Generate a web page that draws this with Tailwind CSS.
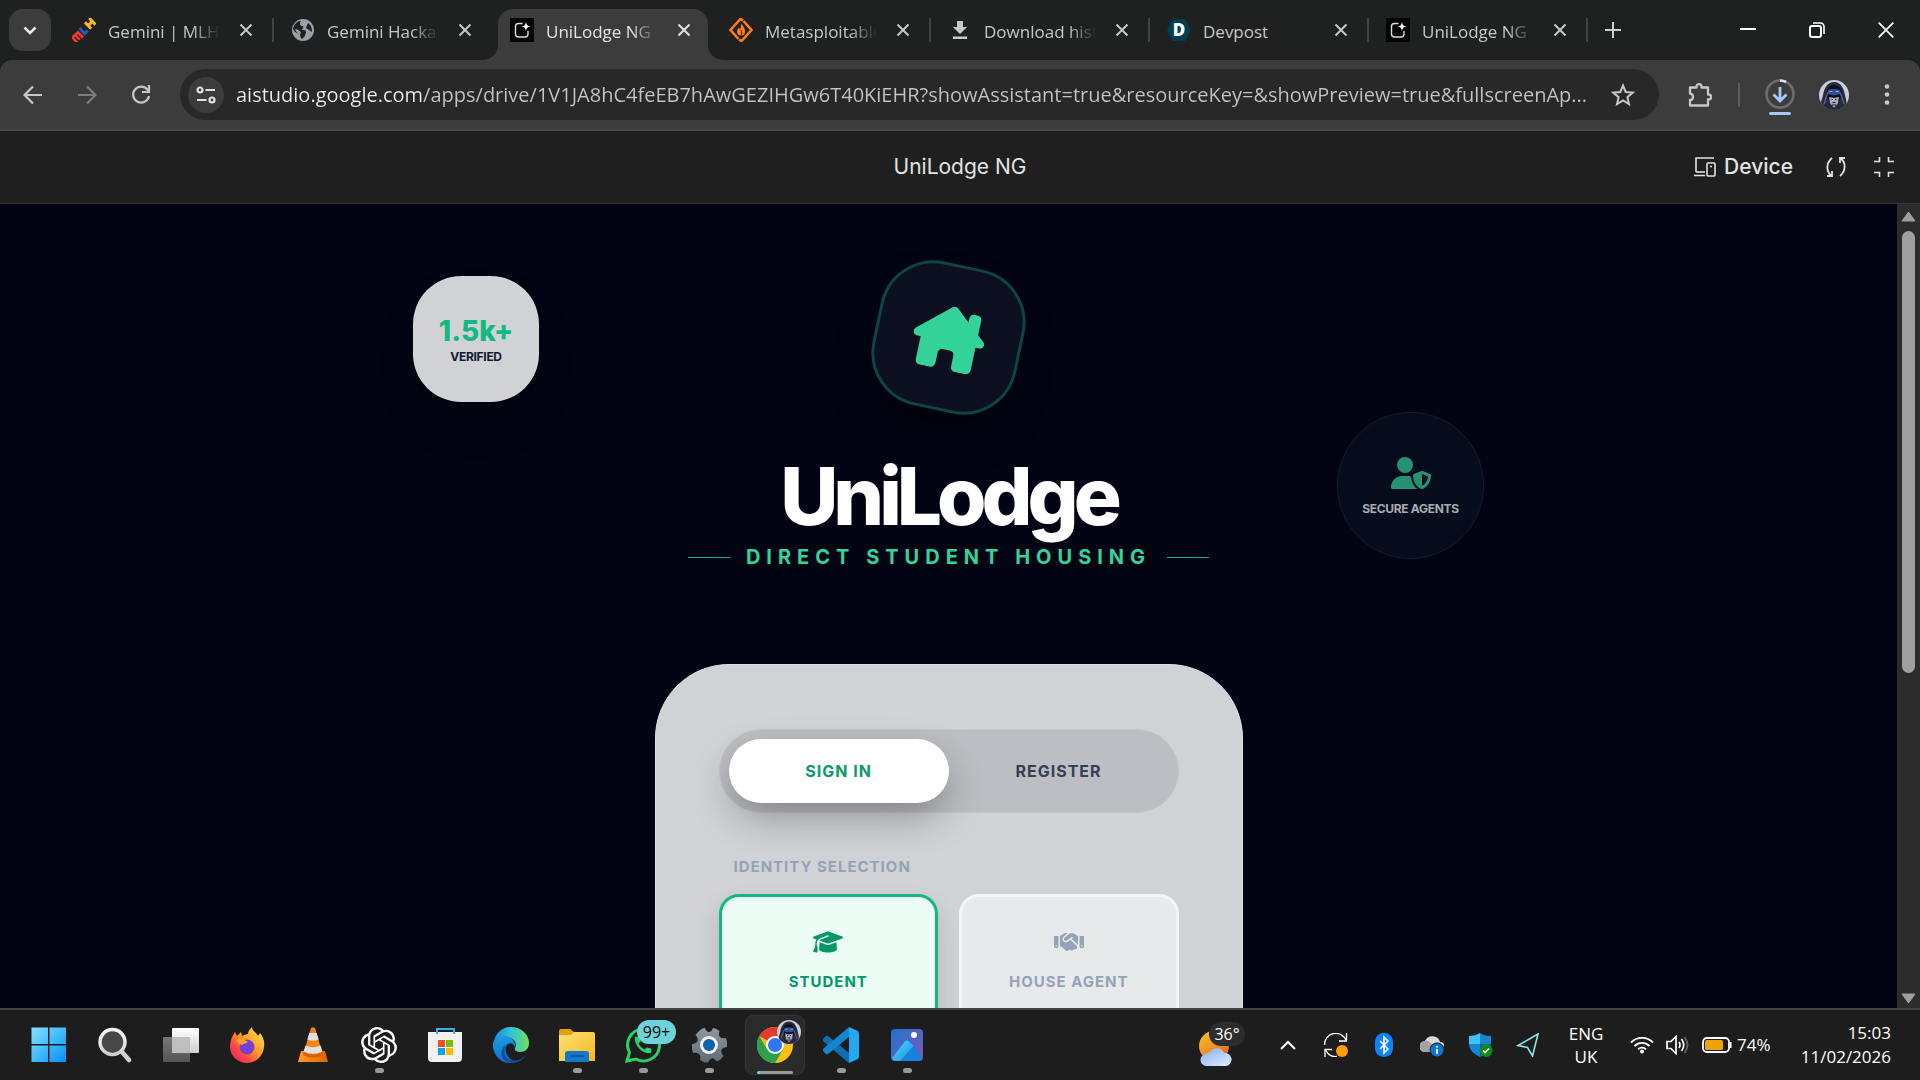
<!DOCTYPE html>
<html lang="en">
<head>
<meta charset="utf-8">
<title>UniLodge NG</title>
<script src="https://cdn.jsdelivr.net/npm/@tailwindcss/browser@4"></script>
</head>
<body class="h-screen flex flex-col overflow-hidden bg-[#1d1d1d] font-['Open_Sans','Noto_Sans',sans-serif] text-white">
<svg class="absolute size-0" aria-hidden="true">
  <defs>
    <symbol id="x" viewBox="0 0 14 14"><path d="M1.500 1.500L12.500 12.500M12.500 1.500L1.500 12.500" fill="none" stroke="currentColor" stroke-width="2"/></symbol>
    <symbol id="studio" viewBox="0 0 24 24"><rect width="24" height="24" fill="#050505"/><path d="M12.500 5.500H8.500a3 3 0 0 0-3 3V16a3 3 0 0 0 3 3H15a3 3 0 0 0 3-3v-3" fill="none" stroke="#ddd" stroke-width="1.400"/><path d="M16 4c.6 3 1.500 4 4.500 4.500C17.500 9 16.600 10 16 13c-.6-3-1.500-4-4.500-4.500C14.500 8 15.400 7 16 4z" fill="#fff"/></symbol>
    <symbol id="avatar" viewBox="0 0 30 30"><circle cx="15" cy="15" r="15" fill="#c9ced9"/><path d="M15 2C8 2 5 9 4 15c-1 5-3 7-1 9 3 4 7 6 12 6s9-2 12-6c1-3 0-4-1-9C25 9 22 2 15 2z" fill="#262b40"/><path d="M15 5c-6 0-8 6-8 11l8 13 8-13c0-5-2-11-8-11z" fill="#0d101c"/><path d="M9 10q6-2 12 0v4c-3 1.500-9 1.500-12 0z" fill="#2f4f94"/><path d="M10 11.500h3.500m3 0H20" stroke="#7ea2e8" stroke-width="1.200"/><path d="M10 17l5 1 5-1-1 6-4 5-4-5z" fill="#a9adb9"/><path d="M12.500 19.500h1.500m2 0h1.500m-4 3h3M13 25h4" stroke="#16181f" stroke-width="1.200"/><path d="M5 24L9 12M25 24l-4-12" stroke="#5c6488" stroke-width="1.300"/></symbol>
    <linearGradient id="win" x1="0" y1="0" x2="1" y2="1"><stop offset="0" stop-color="#8be0ff"/><stop offset=".5" stop-color="#3fbdff"/><stop offset="1" stop-color="#0a8df5"/></linearGradient>
    <linearGradient id="gray" x1="0" y1="0" x2="0" y2="1"><stop offset="0" stop-color="#fff"/><stop offset="1" stop-color="#cfcfd2"/></linearGradient>
    <linearGradient id="back" x1="0" y1="0" x2="0" y2="1"><stop offset="0" stop-color="#777"/><stop offset="1" stop-color="#555"/></linearGradient>
    <linearGradient id="fox" x1="1" y1="0" x2="0" y2="1"><stop offset="0" stop-color="#fff44f"/><stop offset=".45" stop-color="#ff9a24"/><stop offset=".7" stop-color="#ff4a3e"/><stop offset="1" stop-color="#e2147f"/></linearGradient>
    <linearGradient id="cone" x1="0" y1="0" x2="1" y2="0"><stop offset="0" stop-color="#ff9a20"/><stop offset="1" stop-color="#e06500"/></linearGradient>
    <linearGradient id="edge1" x1="0" y1="0" x2="1" y2="0"><stop offset="0" stop-color="#1b8fdc"/><stop offset=".5" stop-color="#31c3d8"/><stop offset="1" stop-color="#6fe05a"/></linearGradient>
    <linearGradient id="edge2" x1="0" y1="0" x2="0" y2="1"><stop offset="0" stop-color="#1b9de2"/><stop offset="1" stop-color="#0b6fd0"/></linearGradient>
    <linearGradient id="folder" x1="0" y1="0" x2="1" y2="1"><stop offset="0" stop-color="#ffe07a"/><stop offset="1" stop-color="#f8b81c"/></linearGradient>
    <linearGradient id="gear" x1="0" y1="0" x2="0" y2="1"><stop offset="0" stop-color="#8f979f"/><stop offset="1" stop-color="#626a73"/></linearGradient>
    <linearGradient id="photo" x1="0" y1="0" x2="1" y2="1"><stop offset="0" stop-color="#1f72d2"/><stop offset="1" stop-color="#7d5bb5"/></linearGradient>
    <linearGradient id="hill" x1="0" y1="0" x2="1" y2="1"><stop offset="0" stop-color="#57e0ff"/><stop offset="1" stop-color="#138ae0"/></linearGradient>
    <linearGradient id="sun" x1="0" y1="0" x2="1" y2="1"><stop offset="0" stop-color="#f7c22d"/><stop offset="1" stop-color="#ea5f16"/></linearGradient>
    <linearGradient id="cloud" x1="0" y1="0" x2="1" y2="1"><stop offset="0" stop-color="#86b0f5"/><stop offset="1" stop-color="#e0edff"/></linearGradient>
  </defs>
</svg>

<!-- Tab strip -->
<header class="shrink-0">
  <div class="h-[60px] bg-[#1f2120] flex items-stretch text-[17px] text-[#c7c7c7]">
    <div class="w-[55px] pl-[9px] flex items-center shrink-0">
      <button aria-label="Search tabs" class="size-[42px] rounded-[14px] bg-[#3c3c3c] grid place-items-center"><svg class="w-[14px] h-[9px]" viewBox="0 0 14 9"><path d="M1.500 1.500L7 7l5.500-5.500" fill="none" stroke="#e8e8e8" stroke-width="2.500"/></svg></button>
    </div>
    <div class="w-[219px] shrink-0 flex items-center pl-[17px] relative">
      <svg class="size-6 shrink-0" viewBox="0 0 24 24"><g transform="rotate(-43 12 12)" fill="none"><path d="M-1.500 17V9.500h7.500V17M2.250 9.500V16" stroke="#ef3a31" stroke-width="2.600"/><path d="M10 7.500V15h4.500" stroke="#1d5cb0" stroke-width="3"/><path d="M18 7v9M24 7v9M18 11.500h6" stroke="#f9b91b" stroke-width="3"/></g></svg>
      <span class="ml-3 pt-[3px] w-[112px] overflow-hidden whitespace-nowrap mask-r-from-75%">Gemini | MLH</span>
      <button aria-label="Close tab" class="ml-[19px]"><svg class="size-[14px]"><use href="#x"/></svg></button>
      <i class="absolute right-0 top-[18px] h-6 w-[2px] bg-[#414342]"></i>
    </div>
    <div class="w-[219px] shrink-0 flex items-center pl-[17px]">
      <svg class="size-6 shrink-0" viewBox="0 0 24 24"><circle cx="12" cy="12" r="11" fill="#9aa0a6"/><path d="M10 3c-2 3-1 5 2 5 1 2-1 3-1 4 2 0 4 0 4 2s-1 2-1 4l-3 3c-2-1-1-4-3-5s-5-2-6-5C3 6 6 3 10 3zM17 5c3 2 4 5 4 9l-3-2-3-2 1-3z" fill="#1f2120"/><path d="M4 11c3 0 4 2 6 3l-1 3c-2-1-4-3-5-6z" fill="#9aa0a6"/></svg>
      <span class="ml-3 pt-[3px] w-[112px] overflow-hidden whitespace-nowrap mask-r-from-75%">Gemini Hackathon</span>
      <button aria-label="Close tab" class="ml-[19px]"><svg class="size-[14px]"><use href="#x"/></svg></button>
    </div>
    <div class="w-[219px] shrink-0 flex items-center pl-[17px] relative isolate text-[#e3e3e3]">
      <svg class="absolute -z-10 -left-[10px] top-[9px] w-[240px] h-[51px]" viewBox="0 0 240 51"><path d="M0 51A15 15 0 0 0 15 36V15A15 15 0 0 1 30 0H210A15 15 0 0 1 225 15V36A15 15 0 0 0 240 51Z" fill="#3c3c3c"/></svg>
      <svg class="size-6 shrink-0"><use href="#studio"/></svg>
      <span class="ml-3 pt-[3px] w-[112px] overflow-hidden whitespace-nowrap mask-r-from-75%">UniLodge NG</span>
      <button aria-label="Close tab" class="ml-[19px]"><svg class="size-[14px]"><use href="#x"/></svg></button>
    </div>
    <div class="w-[219px] shrink-0 flex items-center pl-[17px] relative">
      <svg class="size-6 shrink-0" viewBox="0 0 24 24"><path d="M14 2.500L11.500 1 1.500 12l8 9M10 21.500l2.500 1.500 10-11-8-9" fill="none" stroke="#ff7a1c" stroke-width="2.600"/><path d="M12 5.500c3 3 4 5.500 4 8a4 4 0 0 1-8 0c0-2 1-3 2-4l1 2c1-2 1-4 1-6z" fill="#ff7a1c"/><path d="M12 12c1 2 1 4 0 5" stroke="#1f2120" fill="none"/></svg>
      <span class="ml-3 pt-[3px] w-[112px] overflow-hidden whitespace-nowrap mask-r-from-75%">Metasploitable 2</span>
      <button aria-label="Close tab" class="ml-[19px]"><svg class="size-[14px]"><use href="#x"/></svg></button>
      <i class="absolute right-0 top-[18px] h-6 w-[2px] bg-[#414342]"></i>
    </div>
    <div class="w-[219px] shrink-0 flex items-center pl-[17px] relative">
      <svg class="size-6 shrink-0" viewBox="0 0 24 24"><path d="M9 3h6v6h4l-7 7-7-7h4zM5 18.500h14V21H5z" fill="#c9c9c9"/></svg>
      <span class="ml-3 pt-[3px] w-[112px] overflow-hidden whitespace-nowrap mask-r-from-75%">Download history</span>
      <button aria-label="Close tab" class="ml-[19px]"><svg class="size-[14px]"><use href="#x"/></svg></button>
      <i class="absolute right-0 top-[18px] h-6 w-[2px] bg-[#414342]"></i>
    </div>
    <div class="w-[219px] shrink-0 flex items-center pl-[17px] relative">
      <svg class="size-6 shrink-0" viewBox="0 0 24 24"><path d="M6 1h12l6 11-6 11H6L0 12z" fill="#003e54"/><text x="12" y="18" text-anchor="middle" font-family="Open Sans" font-weight="800" font-size="17" fill="#fff">D</text></svg>
      <span class="ml-3 pt-[3px] w-[112px] overflow-hidden whitespace-nowrap">Devpost</span>
      <button aria-label="Close tab" class="ml-[19px]"><svg class="size-[14px]"><use href="#x"/></svg></button>
      <i class="absolute right-0 top-[18px] h-6 w-[2px] bg-[#414342]"></i>
    </div>
    <div class="w-[219px] shrink-0 flex items-center pl-[17px] relative">
      <svg class="size-6 shrink-0"><use href="#studio"/></svg>
      <span class="ml-3 pt-[3px] w-[112px] overflow-hidden whitespace-nowrap mask-r-from-75%">UniLodge NG</span>
      <button aria-label="Close tab" class="ml-[19px]"><svg class="size-[14px]"><use href="#x"/></svg></button>
      <i class="absolute right-0 top-[18px] h-6 w-[2px] bg-[#414342]"></i>
    </div>
    <button aria-label="New tab" class="w-[50px] grid place-items-center"><svg class="size-4" viewBox="0 0 16 16"><path d="M8 0v16M0 8h16" stroke="#d0d0d0" stroke-width="2"/></svg></button>
    <div class="ml-auto flex text-white">
      <button aria-label="Minimize" class="w-[69px] grid place-items-center"><svg class="size-4" viewBox="0 0 16 16"><path d="M0 7h16" stroke="currentColor" stroke-width="2"/></svg></button>
      <button aria-label="Restore" class="w-[69px] grid place-items-center"><svg class="size-4" viewBox="0 0 16 16"><rect x="1" y="4" width="11" height="11" rx="2" fill="none" stroke="currentColor" stroke-width="2"/><path d="M4 1h7.500A3.500 3.500 0 0 1 15 4.500V12" fill="none" stroke="currentColor" stroke-width="1.600"/></svg></button>
      <button aria-label="Close" class="w-[69px] grid place-items-center"><svg class="size-4" viewBox="0 0 16 16"><path d="M.7.7l14.600 14.600M15.300.7L.7 15.300" stroke="currentColor" stroke-width="1.700"/></svg></button>
    </div>
  </div>

  <!-- Address bar -->
  <div class="bg-[#1f2120]">
  <div class="h-[71px] rounded-t-xl bg-[#3c3c3c] border-b-2 border-[#474747] flex items-center pl-[6px] pr-[6px] text-[#c7c7c7]">
    <button aria-label="Back" class="w-[54px] grid place-items-center"><svg class="size-5" viewBox="0 0 20 20"><path d="M19 10H2M10 1.500L1.500 10l8.500 8.500" fill="none" stroke="currentColor" stroke-width="2.200"/></svg></button>
    <button aria-label="Forward" class="w-[54px] grid place-items-center text-[#7d7d7d]"><svg class="size-5" viewBox="0 0 20 20"><path d="M1 10h17M10 1.500l8.500 8.500-8.500 8.500" fill="none" stroke="currentColor" stroke-width="2.200"/></svg></button>
    <button aria-label="Reload" class="w-[54px] grid place-items-center"><svg class="size-5" viewBox="0 0 20 20"><path d="M17 5.500A8 8 0 1 0 18 11M18 0v7h-7" fill="none" stroke="currentColor" stroke-width="2.200"/></svg></button>
    <div class="ml-3 flex-1 h-[51px] rounded-full bg-[#282828] flex items-center pl-2 pr-6">
      <button aria-label="Site information" class="size-9 shrink-0 rounded-full bg-[#3c3c3c] grid place-items-center"><svg class="size-5" viewBox="0 0 20 20"><g fill="none" stroke="#e3e3e3" stroke-width="2.200"><circle cx="4" cy="5" r="2.500"/><path d="M9.500 5H19M1 15h9.500"/><circle cx="16" cy="15" r="2.500"/></g></svg></button>
      <input aria-label="Address" class="ml-3 flex-1 min-w-0 h-9 outline-none text-[20px] text-transparent bg-clip-text bg-[linear-gradient(90deg,#ececec_187px,#c4c4c4_187px)]" value="aistudio.google.com/apps/drive/1V1JA8hC4feEB7hAwGEZIHGw6T40KiEHR?showAssistant=true&amp;resourceKey=&amp;showPreview=true&amp;fullscreenAp...">
      <button aria-label="Bookmark" class="ml-4"><svg class="size-6" viewBox="0 0 24 24"><path d="M12 2.500l2.700 6.500 7 .6-5.300 4.600 1.600 6.900-6-3.700-6 3.700 1.600-6.900L2.300 9.600l7-.6z" fill="none" stroke="currentColor" stroke-width="2"/></svg></button>
    </div>
    <button aria-label="Extensions" class="ml-[29px]"><svg class="size-6" viewBox="0 0 24 24"><path d="M2 4.500h6.500V3.700a2.500 2.500 0 0 1 5 0v.8H20v7h.6a2.500 2.500 0 0 1 0 5H20v6H2v-5.500c4 0 4-6 0-6.500z" fill="none" stroke="currentColor" stroke-width="2.300" stroke-linejoin="round"/></svg></button>
    <i class="ml-[26px] h-6 w-[2px] bg-[#5c5c5c]"></i>
    <button aria-label="Downloads" class="ml-[24px] pt-2"><svg class="w-[32px] h-[46px]" viewBox="0 0 32 46"><circle cx="16" cy="18" r="13.500" fill="none" stroke="#6e6e6e" stroke-width="2.600"/><path d="M16 4.500a13.500 13.500 0 0 1 6 1.500" fill="none" stroke="#d6e4ff" stroke-width="2.600"/><path d="M16 11v13M9.500 18.500L16 25l6.500-6.500" fill="none" stroke="#a8c7fa" stroke-width="2.800"/><rect x="5" y="36" width="22" height="3" rx="1.500" fill="#a8c7fa"/></svg></button>
    <button aria-label="Profile" class="ml-[23px]"><svg class="size-[30px]"><use href="#avatar"/></svg></button>
    <button aria-label="Menu" class="w-[54px] ml-[11px] grid place-items-center"><svg class="w-[6px] h-[21px]" viewBox="0 0 6 21"><g fill="currentColor"><circle cx="3" cy="2.500" r="2.300"/><circle cx="3" cy="10.500" r="2.300"/><circle cx="3" cy="18.500" r="2.300"/></g></svg></button>
  </div>
  </div>
</header>

<!-- Preview bar -->
<div class="h-[73px] shrink-0 bg-[#1f1f1f] border-b border-[#353535] grid grid-cols-[1fr_auto_1fr] items-center font-['Inter',sans-serif] text-[#e2e2e2] text-[21px]">
  <h2 class="col-start-2">UniLodge NG</h2>
  <div class="flex items-center justify-end pr-[26px]">
    <button class="flex items-center gap-2 font-medium"><svg class="w-[22px] h-[20px]" viewBox="0 0 22 20"><g fill="none" stroke="currentColor" stroke-width="1.600"><path d="M20 1H2v14M0 18.500h11"/><path d="M2 15h9"/><rect x="13" y="6" width="8" height="13" rx="1"/><path d="M16 9.500h2"/></g></svg>Device</button>
    <button aria-label="Reload app" class="ml-[31px]"><svg class="size-6" viewBox="0 0 24 24"><path d="M8 3C2 8 2 16 7 20.500M3 21h5v-5M16 21c6-5 6-13 1-17.500M21 3h-5v5" fill="none" stroke="currentColor" stroke-width="1.800"/></svg></button>
    <button aria-label="Exit full screen" class="ml-[26px]"><svg class="size-5" viewBox="0 0 20 20"><path d="M5.500 0v4.500H0M14.500 0v4.500H20M5.500 20v-4.500H0M14.500 20v-4.500H20" fill="none" stroke="currentColor" stroke-width="1.600"/></svg></button>
  </div>
</div>

<div class="flex-1 min-h-0 flex font-['Inter',sans-serif]">
  <main class="flex-1 overflow-hidden bg-[#020413] flex flex-col items-center">
    <section class="w-[1071px] mt-[60px] grid grid-cols-[1fr_auto_1fr] items-start">
      <div class="mt-3 size-[126px] rounded-[48px] bg-[#d1d2d6] shadow-[0_25px_40px_-12px_#0006] flex flex-col items-center justify-center pt-1">
        <strong class="text-[28px] leading-8 font-extrabold text-[#14b981]">1.5k+</strong>
        <span class="text-[12px] leading-5 font-bold tracking-tight text-[#141b30]">VERIFIED</span>
      </div>
      <div class="flex flex-col items-center">
        <div class="size-[147px] rounded-[54px] border-3 border-[#0c4541] bg-[#0b0f20] rotate-12 grid place-items-center shadow-[0_25px_40px_-12px_#0008]">
          <svg class="w-[72px] h-[64px]" viewBox="0 0 576 512" fill="#34d399"><path d="M543.8 287.6c17 0 32-14 32-32.1c1-9-3-17-11-24L512 185V64c0-17.700-14.300-32-32-32H448c-17.700 0-32 14.300-32 32v36.700L309.500 7c-6-5-14-7-21-7s-15 1-22 8L10 231.500c-7 7-10 15-10 24c0 18 14 32.100 32 32.100h32v69.700c-.1 .9-.1 1.800-.1 2.800V472c0 22.100 17.900 40 40 40h16c1.200 0 2.400-.1 3.600-.2c1.500 .1 3 .2 4.500 .2H160h24c22.100 0 40-17.900 40-40V448 384c0-17.700 14.300-32 32-32h64c17.700 0 32 14.300 32 32v64 24c0 22.100 17.900 40 40 40h24 32.500c1.400 0 2.800 0 4.200-.1c1.100 .1 2.200 .1 3.300 .1h16c22.100 0 40-17.900 40-40V455.800c.3-2.600 .5-5.300 .5-8.100l-.7-160.200h32z"/></svg>
        </div>
        <h1 class="mt-[40px] text-[80px] leading-[90px] font-extrabold tracking-[-5px]">UniLodge</h1>
        <p class="mt-[2px] flex items-center gap-4 text-[20px] leading-7 font-bold tracking-[6px] text-[#34d399] whitespace-nowrap"><i class="w-[42px] h-px bg-[#10b981]"></i><span>DIRECT STUDENT HOUSING</span><i class="w-[42px] h-px bg-[#10b981]"></i></p>
      </div>
      <div class="justify-self-end mt-[148px] size-[147px] rounded-full bg-[#070c1c] border border-[#181b2a] flex flex-col items-center justify-center gap-3 pt-[3px]">
        <svg class="w-10 h-8" viewBox="0 0 640 512" fill="#259371"><path d="M224 256A128 128 0 1 0 224 0a128 128 0 1 0 0 256zm-45.700 48C79.800 304 0 383.800 0 482.300C0 498.700 13.300 512 29.700 512H418.300c1.800 0 3.500-.2 5.300-.5c-76.300-55.100-99.800-141-103.100-200.200c-16.100-4.800-33.100-7.300-50.700-7.300H178.300zm308.800-78.300l-120 48C358 277.400 352 286.200 352 296c0 63.300 25.900 168.800 134.800 214.200c5.900 2.500 12.600 2.500 18.500 0C614.100 464.800 640 359.300 640 296c0-9.800-6-18.600-15.100-22.300l-120-48c-5.700-2.300-12.100-2.300-17.800 0zM591.400 312c-3.900 50.700-27.200 116.700-95.400 149.700V273.800L591.400 312z"/></svg>
        <span class="text-[12px] leading-4 font-bold tracking-tight text-[#a9aab1]">SECURE AGENTS</span>
      </div>
    </section>

    <section class="mt-[93px] w-[588px] h-[700px] shrink-0 rounded-[74px] bg-[#d1d2d6] border border-[#dfe0e3] px-[63px] pt-16">
      <div class="h-[84px] rounded-full bg-[#bdbec3] border border-[#c6c7cb] p-[9px] grid grid-cols-2 text-[16px] font-bold tracking-[1px]">
        <button class="rounded-full bg-white text-[#0b9a6a] shadow-[0_16px_40px_-4px_#0005]">SIGN IN</button>
        <button class="text-[#334155]">REGISTER</button>
      </div>
      <p class="mt-[42px] ml-[15px] text-[15px] leading-6 font-bold tracking-[1px] text-[#94a3b8]">IDENTITY SELECTION</p>
      <div class="mt-[15px] grid grid-cols-2 gap-[21px] text-[15px] leading-6 font-bold tracking-[1px]">
        <button class="h-[144px] rounded-[20px] border-3 border-[#10b981] bg-[#ebfdf5] text-[#05966a] shadow-[0_12px_24px_#0002] flex flex-col items-center pt-[33px] gap-[16px]">
          <svg class="w-[30px] h-6" viewBox="0 0 640 512" fill="currentColor"><path d="M320 32c-8.100 0-16.100 1.400-23.700 4.100L15.800 137.400C6.300 140.900 0 149.900 0 160s6.300 19.100 15.800 22.600l57.900 20.900C57.300 229.300 48 259.800 48 291.900v28.100c0 28.400-10.800 57.700-22.300 80.800c-6.500 13-13.900 25.800-22.500 37.600C0 442.700-.9 448.300 .9 453.400s6 8.900 11.200 10.200l64 16c4.200 1.100 8.700 .3 12.400-2s6.300-6.100 7.100-10.400c8.600-42.800 4.300-81.200-2.100-108.700C90.300 344.300 86 329.800 80 316.500V291.900c0-30.200 10.200-58.700 27.900-81.500c12.900-15.500 29.600-28 49.200-35.700l157-61.700c8.200-3.200 17.500 .8 20.700 9s-.8 17.500-9 20.700l-157 61.700c-12.400 4.900-23.300 12.400-32.200 21.600l159.600 57.600c7.600 2.700 15.600 4.100 23.700 4.100s16.100-1.400 23.700-4.100L624.200 182.600c9.500-3.400 15.800-12.500 15.800-22.600s-6.300-19.100-15.800-22.600L343.700 36.100C336.100 33.400 328.100 32 320 32zM128 408c0 35.300 86 72 192 72s192-36.700 192-72L496.700 262.600 354.500 314c-11.100 4-22.800 6-34.500 6s-23.500-2-34.500-6L143.300 262.600 128 408z"/></svg>STUDENT</button>
        <button class="h-[144px] rounded-[20px] border-3 border-[#f1f4f9] bg-[#e8e9eb] text-[#94a3b8] flex flex-col items-center pt-[33px] gap-[16px]">
          <svg class="w-[30px] h-6" viewBox="0 0 640 512" fill="currentColor"><path d="M323.400 85.200l-96.800 78.400c-16.100 13-19.200 36.400-7 53.100c12.900 17.800 38 21.300 55.300 7.800l99.300-77.200c7-5.400 17-4.200 22.500 2.800s4.200 17-2.800 22.500l-20.900 16.200L512 316.800V128h-.7l-3.900-2.500L434.800 79c-15.300-9.800-33.200-15-51.400-15c-21.800 0-43 7.500-60 21.200zm22.800 124.400l-51.700 40.200C263 274.300 217.300 268 193.700 235.600c-22.200-30.500-16.600-73.100 12.700-96.800l83.200-67.300c-11.600-4.900-24.100-7.400-36.800-7.400C234 64 215.700 69.600 200 80l-72 48V352h28.200l91.400 83.400c19.600 17.900 49.900 16.500 67.800-3.100c5.500-6.100 9.200-13.200 11.100-20.600l17 15.600c19.500 17.900 49.900 16.600 67.800-2.900c4.500-4.900 7.800-10.600 9.900-16.500c19.400 13 45.800 10.300 62.100-7.500c17.900-19.500 16.600-49.900-2.900-67.800l-134.200-123zM16 128c-8.800 0-16 7.200-16 16V352c0 17.700 14.300 32 32 32H64c17.700 0 32-14.300 32-32V128H16zM48 320a16 16 0 1 1 0 32 16 16 0 1 1 0-32zM544 128V352c0 17.700 14.300 32 32 32h32c17.700 0 32-14.300 32-32V144c0-8.800-7.200-16-16-16H544zm32 208a16 16 0 1 1 32 0 16 16 0 1 1 -32 0z"/></svg>HOUSE AGENT</button>
      </div>
    </section>
  </main>
  <div class="w-[23px] bg-[#2c2c2c] flex flex-col items-center py-[7px]" aria-hidden="true">
    <svg class="w-[15px] h-[11px]" viewBox="0 0 15 11"><path d="M7.500 1L14 10H1z" fill="#9f9f9f" stroke="#9f9f9f" stroke-linejoin="round"/></svg>
    <div class="mt-[9px] w-[13px] h-[442px] rounded-full bg-[#9f9f9f]"></div>
    <svg class="mt-auto mb-[-3px] w-[15px] h-[11px]" viewBox="0 0 15 11"><path d="M7.500 10L14 1H1z" fill="#9f9f9f" stroke="#9f9f9f" stroke-linejoin="round"/></svg>
  </div>
</div>

<!-- Taskbar -->
<footer class="h-[72px] shrink-0 bg-[#1d1d1d] border-t-2 border-[#434343] flex items-center pl-[16px] pr-[29px]">
  <nav class="flex" aria-label="Taskbar">
    <button aria-label="Start" class="w-[66px] h-[60px] grid place-items-center"><svg class="size-9" viewBox="0 0 36 36"><path d="M.5.5h16.500V17H.5zM18.500.5H35V17H18.500zM.5 18.500h16.500V35H.5zM18.500 18.500H35V35H18.500z" fill="url(#win)"/></svg></button>
    <button aria-label="Search" class="w-[66px] h-[60px] grid place-items-center"><svg class="size-9" viewBox="0 0 36 36"><path d="M25 25l7 8" stroke="#cdd1da" stroke-width="4.500" stroke-linecap="round"/><circle cx="15.500" cy="15" r="12.500" fill="#484848" stroke="url(#gray)" stroke-width="3.500"/></svg></button>
    <button aria-label="Task view" class="w-[66px] h-[60px] grid place-items-center"><svg class="size-9" viewBox="0 0 36 36"><rect x="9" y="1" width="27" height="25" rx="1" fill="url(#gray)"/><rect y="10" width="27" height="25" rx="1" fill="url(#back)"/><path d="M9 10h18v16H9z" fill="#bfbfbf"/></svg></button>
    <button aria-label="Firefox" class="w-[66px] h-[60px] grid place-items-center"><svg class="size-9" viewBox="0 0 36 36"><path d="M3 10l3-5 2 4 4-4 1 4c2-1 4-2 6-2 0-3 2-5 4-7 0 4 4 5 6 9l2-3c3 4 5 8 4 14-1 9-8 16-17 16S1 29 1 20c0-4 1-7 2-10z" fill="url(#fox)"/><circle cx="18" cy="20" r="7.500" fill="#7440d8"/><path d="M6 10c3 3 8 1 13 5-2 2-4 1-6 3-3-1-6-3-7-8z" fill="#ffa22d"/></svg></button>
    <button aria-label="VLC" class="w-[66px] h-[60px] grid place-items-center"><svg class="size-9" viewBox="0 0 36 36"><path d="M6 24h24l3 11H3z" fill="url(#cone)"/><path d="M9 23l-1 5q10 5 20 0l-1-5z" fill="#d95f00"/><path d="M16 1q2-1.500 4 0l7 24q-9 5-18 0z" fill="#f5860f"/><path d="M14.300 6h7.300l2.200 6.500q-5.800 2.500-11.500 0zM10.500 18.500q7 3.500 15 0l2 6q-9 4.500-19 0z" fill="#dfe2e4"/></svg></button>
    <button aria-label="ChatGPT" class="w-[66px] h-[60px] grid place-items-center relative"><svg class="size-9" viewBox="0 0 24 24" fill="#fff"><path d="M22.2819 9.8211a5.9847 5.9847 0 0 0-.5157-4.9108 6.0462 6.0462 0 0 0-6.5098-2.9A6.0651 6.0651 0 0 0 4.9807 4.1818a5.9847 5.9847 0 0 0-3.9977 2.9 6.0462 6.0462 0 0 0 .7427 7.0966 5.98 5.98 0 0 0 .511 4.9107 6.051 6.051 0 0 0 6.5146 2.9001A5.9847 5.9847 0 0 0 13.2599 24a6.0557 6.0557 0 0 0 5.7718-4.2058 5.9894 5.9894 0 0 0 3.9977-2.9001 6.0557 6.0557 0 0 0-.7475-7.0729zm-9.022 12.6081a4.4755 4.4755 0 0 1-2.8764-1.0408l.1419-.0804 4.7783-2.7582a.7948.7948 0 0 0 .3927-.6813v-6.7369l2.02 1.1686a.071.071 0 0 1 .038.052v5.5826a4.504 4.504 0 0 1-4.4945 4.4944zm-9.6607-4.1254a4.4708 4.4708 0 0 1-.5346-3.0137l.142.0852 4.783 2.7582a.7712.7712 0 0 0 .7806 0l5.8428-3.3685v2.3324a.0804.0804 0 0 1-.0332.0615L9.74 19.9502a4.4992 4.4992 0 0 1-6.1408-1.6464zM2.3408 7.8956a4.485 4.485 0 0 1 2.3655-1.9728V11.6a.7664.7664 0 0 0 .3879.6765l5.8144 3.3543-2.0201 1.1685a.0757.0757 0 0 1-.071 0l-4.8303-2.7865A4.504 4.504 0 0 1 2.3408 7.872zm16.5963 3.8558L13.1038 8.364 15.1192 7.2a.0757.0757 0 0 1 .071 0l4.8303 2.7913a4.4944 4.4944 0 0 1-.6765 8.1042v-5.6772a.79.79 0 0 0-.407-.667zm2.0107-3.0231l-.142-.0852-4.7735-2.7818a.7759.7759 0 0 0-.7854 0L9.409 9.2297V6.8974a.0662.0662 0 0 1 .0284-.0615l4.8303-2.7866a4.4992 4.4992 0 0 1 6.6802 4.66zM8.3065 12.863l-2.02-1.1638a.0804.0804 0 0 1-.038-.0567V6.0742a4.4992 4.4992 0 0 1 7.3757-3.4537l-.142.0805L8.704 5.459a.7948.7948 0 0 0-.3927.6813zm1.0976-2.3654l2.602-1.4998 2.6069 1.4998v2.9994l-2.5974 1.4997-2.6067-1.4997Z"/></svg><i class="absolute bottom-[2px] left-[29px] w-[9px] h-[5px] rounded-full bg-[#9a9a9a]"></i></button>
    <button aria-label="Microsoft Store" class="w-[66px] h-[60px] grid place-items-center"><svg class="size-9" viewBox="0 0 36 36"><path d="M1 5h34v26a4 4 0 0 1-4 4H5a4 4 0 0 1-4-4z" fill="#f1f1f1"/><path d="M10 7V2h17v5" fill="none" stroke="#2cb4ee" stroke-width="2"/><path d="M11 13h7v7h-7z" fill="#f25022"/><path d="M19 13h7v7h-7z" fill="#7fba00"/><path d="M11 21h7v7h-7z" fill="#00a4ef"/><path d="M19 21h7v7h-7z" fill="#ffb900"/></svg></button>
    <button aria-label="Edge" class="w-[66px] h-[60px] grid place-items-center"><svg class="size-9" viewBox="0 0 36 36"><path d="M1 13C4 5 10 0 18 0c10 0 18 7 18 16 0 6-4 9-9 9-4 0-6-2-5-4 2-3 1-8-5-10C11 8 5 9 1 13z" fill="url(#edge1)"/><path d="M0 18C0 12 5 8 11 9c8 1 12 6 11 11-1-3-4-5-7-3-5 4-2 13 4 16l2 2.700C9 38 0 29 0 18z" fill="url(#edge2)"/><path d="M15 16c-6 5-4 16 4 17 6 1 10-1 14-5-3 5-8 8-15 8-10 0-14-13-3-20z" fill="#124f9b"/></svg></button>
    <button aria-label="File Explorer" class="w-[66px] h-[60px] grid place-items-center relative"><svg class="size-9" viewBox="0 0 36 36"><path d="M0 4a2 2 0 0 1 2-2h9l4 3v5H0z" fill="#e3a008"/><path d="M0 8h12l3-3h19a2 2 0 0 1 2 2v27H0z" fill="url(#folder)"/><path d="M6 35v-8a3 3 0 0 1 3-3h18a3 3 0 0 1 3 3v8z" fill="#1278cc"/><path d="M11 29h14" stroke="#0a4b8c" stroke-width="1.500"/></svg><i class="absolute bottom-[2px] left-[29px] w-[9px] h-[5px] rounded-full bg-[#9a9a9a]"></i></button>
    <button aria-label="WhatsApp" class="w-[66px] h-[60px] grid place-items-center relative"><svg class="size-9" viewBox="0 0 36 36"><path d="M2 34l2.500-8.500A16 16 0 1 1 11 32z" fill="none" stroke="#25d366" stroke-width="3"/><g transform="translate(7 7) scale(.92)"><path d="M20 15.400c-1.200 0-2.400-.2-3.500-.6-.4-.1-.7 0-1 .2L13.900 17c-2.800-1.400-5.500-3.900-6.900-6.800l2-1.700c.2-.3.300-.7.2-1C8.800 6.400 8.600 5.200 8.600 4c0-.6-.4-1-1-1H4.200C3.600 3 3 3.200 3 4c0 9.300 7.700 17 17 17 .7 0 1-.6 1-1.200v-3.400c0-.6-.4-1-1-1z" fill="#25d366"/></g></svg><span class="absolute top-[5px] right-0 w-[39px] h-6 rounded-full bg-[#6dd3da] text-black text-[16px] leading-6 text-center">99+</span><i class="absolute bottom-[2px] left-[29px] w-[9px] h-[5px] rounded-full bg-[#9a9a9a]"></i></button>
    <button aria-label="Settings" class="w-[66px] h-[60px] grid place-items-center relative"><svg class="size-9" viewBox="0 0 36 36"><path d="M11.500 1.500l2.500-.5q1.500 4 4 4t4-4l2.500.5 4 2.500q-1.500 4 .5 6t6 1l1 4v5q-4.500.5-5.500 3t2 6l-3.500 4-3.500 1.500q-2.500-4-5-3t-3.500 4h-3.500l-4.500-2.500q1-4-1-6t-6-1l-1-4v-5q4.500-.5 5.500-3t-2-6l3.500-4z" fill="url(#gear)"/><circle cx="18" cy="18" r="9" fill="#f2f2f2"/><circle cx="18" cy="18" r="6" fill="#0f62b0"/></svg><i class="absolute bottom-[2px] left-[29px] w-[9px] h-[5px] rounded-full bg-[#9a9a9a]"></i></button>
    <button aria-label="Chrome" class="w-[60px] mx-[3px] h-[60px] rounded-lg bg-[#2a2a2a] border border-[#353535] grid place-items-center relative"><svg class="size-9" viewBox="0 0 36 36"><circle cx="18" cy="18" r="18" fill="#fbc116"/><path d="M18 18L2.400 9A18 18 0 0 1 33.600 9H18z" fill="#e33b2e"/><path d="M2.400 9A18 18 0 0 0 18 36l8-13.500H10.200z" fill="#2da04e"/><circle cx="18" cy="18" r="9" fill="#fff"/><circle cx="18" cy="18" r="7" fill="#2f77ee"/></svg><svg class="absolute top-1 right-[3px] size-6"><use href="#avatar"/></svg><i class="absolute bottom-0 left-[11px] w-[36px] h-[3px] rounded-full bg-linear-to-r from-[#6dd3da] from-8% to-[#9a9a9a] to-8%"></i></button>
    <button aria-label="Visual Studio Code" class="w-[66px] h-[60px] grid place-items-center relative"><svg class="size-9" viewBox="0 0 36 36"><path d="M0 12l3-3q1-.8 2 0l21 17v10L.5 14.500q-1.200-1.300-.5-2.500z" fill="#0d6fb5"/><path d="M0 24l3 3q1 .8 2 0L26 10V0L.5 21.500q-1.200 1.300-.5 2.500z" fill="#1287cf"/><path d="M26 0l8 3.500q2 1 2 3v23q0 2-2 3L26 36z" fill="#26a7f2"/></svg><i class="absolute bottom-[2px] left-[29px] w-[9px] h-[5px] rounded-full bg-[#9a9a9a]"></i></button>
    <button aria-label="Photos" class="w-[66px] h-[60px] grid place-items-center relative"><svg class="size-8" viewBox="0 0 32 32"><rect width="32" height="32" rx="4" fill="url(#photo)"/><path d="M2 31L14 12q2-2 4 0l13 17q-1 3-4 3H5z" fill="#1583dc"/><path d="M1 29L13.500 13q2.500-3 5 0l4 4L9 32H4q-2 0-3-3z" fill="url(#hill)"/><circle cx="23" cy="6" r="3" fill="#fff"/></svg><i class="absolute bottom-[2px] left-[29px] w-[9px] h-[5px] rounded-full bg-[#9a9a9a]"></i></button>
  </nav>
  <div class="ml-auto flex items-center text-[17px] leading-6">
    <button aria-label="Weather" class="relative w-[46px] h-[46px]"><svg class="absolute left-0 top-2 w-[34px] h-[36px]" viewBox="0 0 34 36"><circle cx="15" cy="16" r="15" fill="url(#sun)"/><path d="M8 36a6 6 0 0 1-1-12 5 5 0 0 1 4-2 8 8 0 0 1 14 1 6.500 6.500 0 0 1 2 13z" fill="url(#cloud)"/></svg><span class="absolute left-[10px] top-0 w-9 h-6 rounded-full bg-[#2d2d2d] text-[16px]">36°</span></button>
    <button aria-label="Hidden icons" class="ml-[35px]"><svg class="block w-4 h-[10px]" viewBox="0 0 16 10"><path d="M1 9l7-7 7 7" fill="none" stroke="#fff" stroke-width="2"/></svg></button>
    <button aria-label="Update" class="ml-[28px]"><svg class="block size-6" viewBox="0 0 24 24"><g fill="none" stroke="#fff" stroke-width="1.300"><path d="M.7 12A11 11 0 0 1 22 7.500M22.500 0v8H15M1 24v-7.500h7M2 17.500a11 11 0 0 0 11 6"/></g><circle cx="18" cy="18" r="6" fill="#ff9c0a"/></svg></button>
    <button aria-label="Bluetooth" class="ml-[27px]"><svg class="block w-[18px] h-6" viewBox="0 0 18 24"><rect width="18" height="24" rx="8.500" fill="#0a84ff"/><path d="M5 8l8 8-4 4V4l4 4-8 8" fill="none" stroke="#fff" stroke-width="1.600"/></svg></button>
    <button aria-label="OneDrive" class="ml-[27px]"><svg class="block w-6 h-6" viewBox="0 0 24 24"><path d="M5 19a5.500 5.500 0 0 1 0-11 8 8 0 0 1 15 1 5 5 0 0 1 0 10z" fill="#d9d9d9"/><path d="M5 19a5.500 5.500 0 0 1 0-11c3-1 5 1 7 4l-3 7z" fill="#a2a2a2"/><circle cx="17" cy="17" r="7.500" fill="#1d1d1d"/><circle cx="17" cy="17" r="6.500" fill="#0a78d4"/><path d="M17 13v1.500M17 16v5" stroke="#fff" stroke-width="2"/></svg></button>
    <button aria-label="Windows Security" class="ml-[25px]"><svg class="block size-6" viewBox="0 0 24 24"><path d="M11 0c3 2 6 3 11 3v8c0 6-5 10-11 13C5 21 0 17 0 11V3c5 0 8-1 11-3z" fill="#1686d3"/><path d="M11 0v11H0V3c5 0 8-1 11-3z" fill="#38c4f4"/><path d="M11 11h11c0 6-5 10-11 13z" fill="#0f5ca8"/><circle cx="17" cy="17.500" r="6.500" fill="#0e8a1c"/><path d="M14 17.500l2 2 4-4" fill="none" stroke="#fff" stroke-width="1.600"/></svg></button>
    <button aria-label="Location" class="ml-[23px]"><svg class="block size-6" viewBox="0 0 24 24"><path d="M22 1L2 12.500l9.500 2L16.500 23z" fill="none" stroke="#8fe3e6" stroke-width="1.600"/></svg></button>
    <button class="ml-[27px] w-[38px] leading-[23px] text-center">ENG UK</button>
    <button class="ml-[25px] flex items-center" aria-label="Network, volume and battery, 74%">
      <svg class="w-6 h-[18px]" viewBox="0 0 24 18"><g fill="none" stroke="#fff" stroke-width="1.800"><path d="M1 6.500a15.500 15.500 0 0 1 22 0M4.500 10a10.500 10.500 0 0 1 15 0M8 13.300a5.500 5.500 0 0 1 8 0"/></g><circle cx="12" cy="15.500" r="2" fill="#fff"/></svg>
      <svg class="ml-3 w-6 h-5" viewBox="0 0 24 20"><g fill="none" stroke="#fff" stroke-width="1.700"><path d="M1 6.500h4l5-5v17l-5-5H1zM13 7q2 3 0 6M15.500 4q4.500 6 0 12"/><path d="M18.500 2q6 8 0 16" stroke="#666"/></g></svg>
      <svg class="ml-3 w-[30px] h-4" viewBox="0 0 30 16"><rect x="1" y="1" width="26" height="14" rx="4" fill="none" stroke="#fff" stroke-width="1.800"/><rect x="3" y="3" width="18" height="10" rx="1.500" fill="#eea302"/><path d="M28.500 5v6" stroke="#fff" stroke-width="2"/></svg>
      <span class="ml-[5px] w-[36px] text-left">74%</span>
    </button>
    <button class="ml-[24px] w-[94px] whitespace-nowrap text-right">15:03<br>11/02/2026</button>
  </div>
</footer>
</body>
</html>
